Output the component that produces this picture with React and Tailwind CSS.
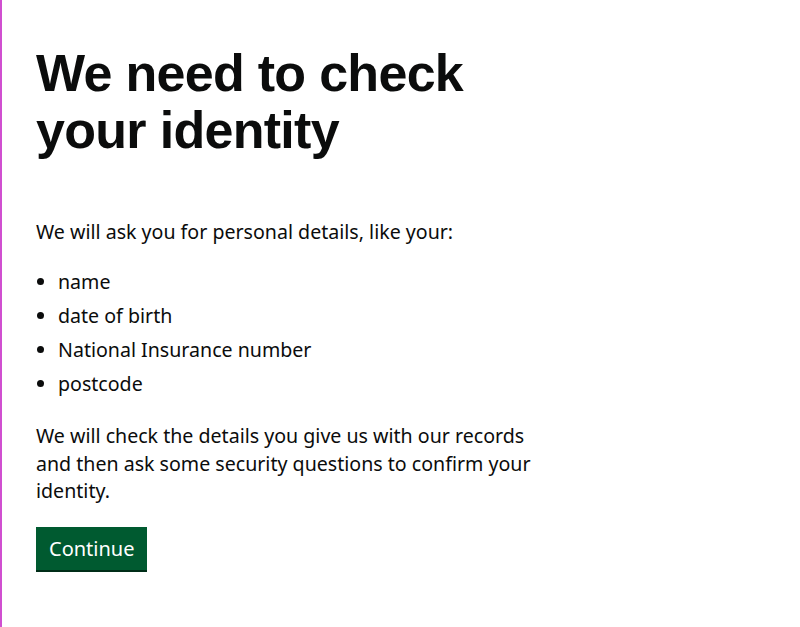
const DETAILS = ['name', 'date of birth', 'National Insurance number', 'postcode']

export default function App() {
  return (
    <div className="min-h-screen bg-white border-l-2 border-[#d04fd0] text-[#0b0c0c] font-['Noto_Sans',sans-serif]">
      <main className="pl-[34px] pt-[45px] w-[560px]">
        <h1 className="font-['Liberation_Sans',sans-serif] font-bold text-[52px] leading-[57px] tracking-[-0.7px] mb-[59px]">
          We need to check
          <br />
          your identity
        </h1>

        <p className="text-[19.6px] leading-[28px] mb-[22px]">
          We will ask you for personal details, like your:
        </p>

        <ul className="list-disc pl-[22px] text-[19.6px] leading-[28px] mb-[24px]">
          {DETAILS.map((item) => (
            <li key={item} className="mb-[6px]">
              {item}
            </li>
          ))}
        </ul>

        <p className="text-[19.6px] leading-[27.5px] mb-[22px] w-[520px]">
          We will check the details you give us with our records and then ask some security questions to confirm your identity.
        </p>

        <button className="bg-[#005a30] text-white text-[20px] leading-[25px] px-[13px] pt-[9px] pb-[9px] border-b-2 border-[#002d18]">
          Continue
        </button>
      </main>
    </div>
  )
}
